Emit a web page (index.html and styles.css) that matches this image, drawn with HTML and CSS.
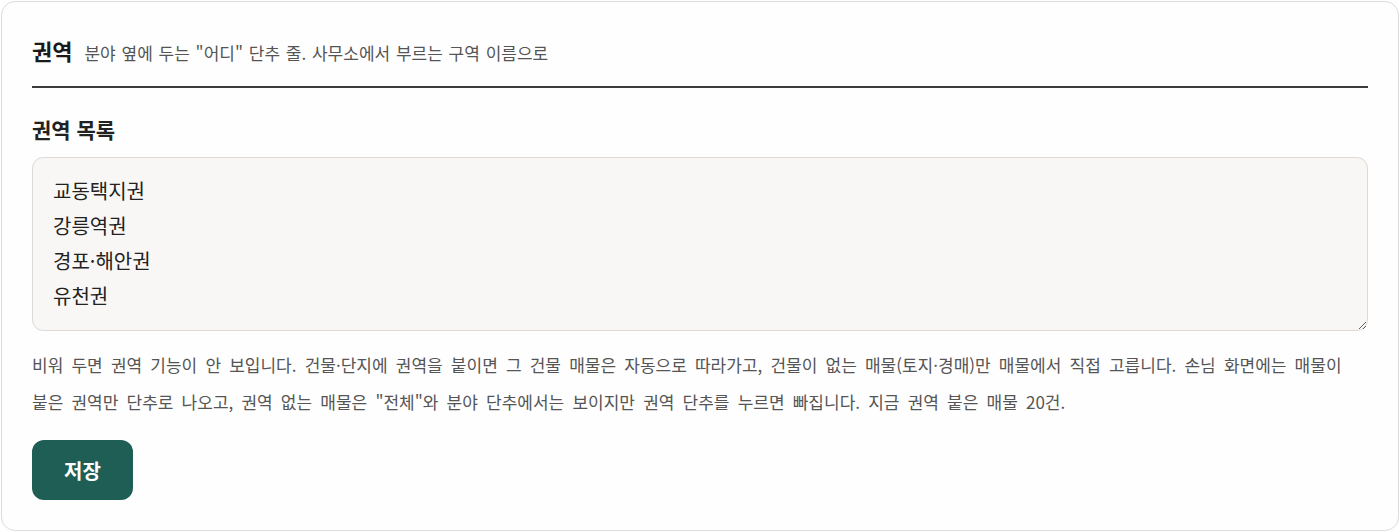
FILE: index.html
```html
<!DOCTYPE html>
<html lang="ko">
<head>
<meta charset="utf-8">
<link rel="stylesheet" href="styles.css">
</head>
<body>
<section class="card">
  <header class="head">
    <h2 class="title">권역</h2>
    <span class="sub">분야 옆에 두는 "어디" 단추 줄. 사무소에서 부르는 구역 이름으로</span>
  </header>
  <label class="label" for="zones">권역 목록</label>
  <textarea id="zones" class="area">교동택지권
강릉역권
경포·해안권
유천권</textarea>
  <p class="help">비워 두면 권역 기능이 안 보입니다. 건물·단지에 권역을 붙이면 그 건물 매물은 자동으로 따라가고, 건물이 없는 매물(토지·경매)만 매물에서 직접 고릅니다. 손님 화면에는 매물이 붙은 권역만 단추로 나오고, 권역 없는 매물은 "전체"와 분야 단추에서는 보이지만 권역 단추를 누르면 빠집니다. 지금 권역 붙은 매물 20건.</p>
  <button class="save" type="button">저장</button>
</section>
</body>
</html>
```

FILE: styles.css
```css
* { box-sizing: border-box; }
html, body { margin: 0; padding: 0; background: #ffffff; }
body {
  font-family: "Noto Sans CJK KR", "Noto Sans", sans-serif;
  color: #222;
  padding: 1px;
}
.card {
  height: 530px;
  border: 1px solid #dedcd8;
  border-radius: 14px;
  background: #fefefe;
  padding: 33px 30px 0 30px;
}
.head {
  display: flex;
  align-items: baseline;
  gap: 12px;
  padding-bottom: 18px;
  border-bottom: 2px solid #3a3a3a;
}
.title {
  margin: 0;
  font-size: 22px;
  line-height: 30px;
  font-weight: 700;
  color: #1a1a1a;
}
.sub {
  font-size: 17px;
  line-height: 30px;
  word-spacing: 1px;
  color: #555;
}
.label {
  display: block;
  margin-top: 27px;
  font-size: 21px;
  line-height: 28px;
  font-weight: 700;
  color: #222;
}
.area {
  display: block;
  width: 100%;
  height: 174px;
  margin-top: 14px;
  padding: 15px 20px;
  border: 1px solid #dddad5;
  border-radius: 11px;
  background: #f9f7f5;
  font-family: inherit;
  font-size: 20px;
  line-height: 35px;
  color: #222;
  resize: vertical;
}
.help {
  margin: 15px 0 0;
  font-size: 17px;
  line-height: 37px;
  word-spacing: 3.4px;
  word-break: keep-all;
  color: #555;
}
.save {
  display: block;
  margin-top: 20px;
  width: 101px;
  height: 60px;
  border: none;
  border-radius: 12px;
  background: #1e5e55;
  color: #fff;
  font-family: inherit;
  font-size: 20px;
  font-weight: 700;
}
```
